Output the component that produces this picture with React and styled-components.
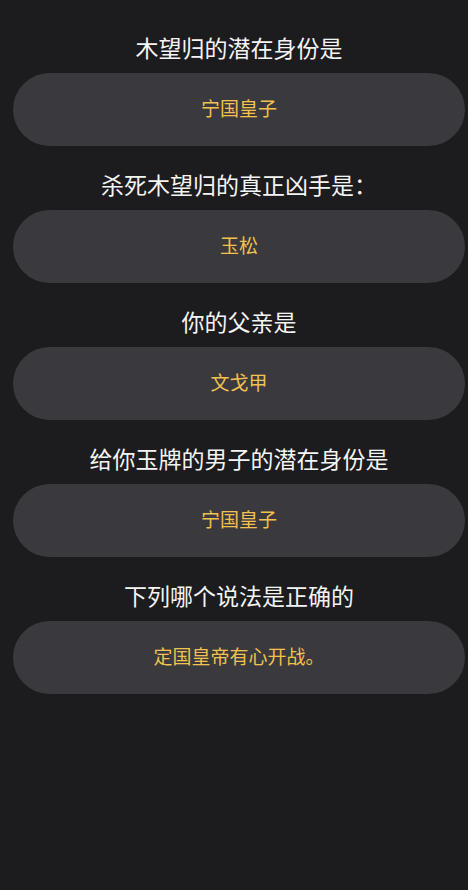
import React from 'react';
import styled, { createGlobalStyle } from 'styled-components';

const GlobalStyle = createGlobalStyle`
  html, body {
    margin: 0;
    padding: 0;
    background: #1c1b1e;
  }
  body {
    font-family: "Noto Sans CJK SC", "Noto Sans", sans-serif;
  }
`;

const Page = styled.div`
  min-height: 890px;
  box-sizing: border-box;
  padding: 35px 3px 0 13px;
  background: #1c1b1e;
  display: flex;
  flex-direction: column;
  gap: 26px;
`;

const Block = styled.div`
  display: flex;
  flex-direction: column;
  gap: 8px;
`;

const Question = styled.div`
  height: 30px;
  line-height: 24px;
  text-align: center;
  color: #f4f4f4;
  font-size: 23px;
`;

const Answer = styled.div`
  height: 73px;
  box-sizing: border-box;
  padding-bottom: 4px;
  border-radius: 37px;
  background: #3a393e;
  display: flex;
  align-items: center;
  justify-content: center;
  color: #f2c14e;
  font-size: 19px;
`;

const items = [
  { q: '木望归的潜在身份是', a: '宁国皇子' },
  { q: '杀死木望归的真正凶手是：', a: '玉松' },
  { q: '你的父亲是', a: '文戈甲' },
  { q: '给你玉牌的男子的潜在身份是', a: '宁国皇子' },
  { q: '下列哪个说法是正确的', a: '定国皇帝有心开战。' },
];

export default function App() {
  return (
    <>
      <GlobalStyle />
      <Page>
        {items.map((item, i) => (
          <Block key={i}>
            <Question>{item.q}</Question>
            <Answer>{item.a}</Answer>
          </Block>
        ))}
      </Page>
    </>
  );
}
